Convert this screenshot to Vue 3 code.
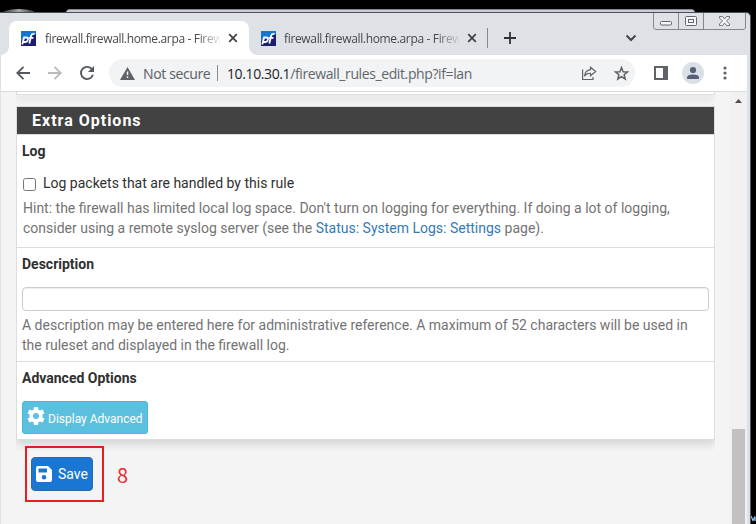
<script setup>
import { ref } from 'vue'
const tabs = [
  { title: 'firewall.firewall.home.arpa - Firew', active: true },
  { title: 'firewall.firewall.home.arpa - Firew', active: false },
]
const logPackets = ref(false)
const description = ref('')
</script>

<template>
  <div class="desktop">
    <div class="behind"></div>
    <div class="orb"></div>
    <svg class="speck" width="5" height="7" viewBox="0 0 5 7"><path d="M0 1L2 5.500L4 1.500V6" fill="none" stroke="#8dbde8" stroke-width="1.300" /><path d="M0 2V4" stroke="#c36a35" /></svg>
    <div class="window">
      <div class="controls">
        <svg width="94" height="18" viewBox="0 0 94 18" fill="none" stroke="#64686e">
          <path d="M.5 0V14q0 2.500 2.500 2.500H90q2.500 0 2.500-2.500V0M25.500 0V16.500M50.500 0V16.500" stroke="#84888d" />
          <rect x="7.500" y="8.500" width="11" height="3.500" rx="1" fill="#f4f5f6" />
          <rect x="32.500" y="3.500" width="11" height="9" rx="1" fill="#f4f5f6" />
          <rect x="35.500" y="6.500" width="5" height="3" />
          <path d="M66.500 3.500h3l2 2.500 2-2.500h3v1.500l-3 3 3 3v1.500h-3l-2-2.500-2 2.500h-3V11l3-3-3-3z" fill="#f4f5f6" stroke-width=".9" />
        </svg>
      </div>

      <div class="tabs">
        <div v-for="(tab, i) in tabs" :key="i" class="tab" :class="{ active: tab.active }">
          <svg class="favicon" width="15" height="15" viewBox="0 0 15 15">
            <rect width="15" height="15" fill="#1c1c72" />
            <path d="M0 0H15V3L0 10z" fill="#1476d0" />
            <g fill="none" stroke="#fff" stroke-width="1.800">
              <path d="M1.200 13.500L3.300 5.800M3 6.500H5.500Q7.500 6.500 6.900 8.800T4.500 11H2.200" />
              <path d="M8.300 12.500L10.200 4.600Q10.700 2.700 13.500 3M7.800 6.800H12.500" />
            </g>
          </svg>
          <span class="title">{{ tab.title }}</span>
          <svg class="close" width="10" height="10" viewBox="0 0 10 10"><path d="M1.200 1.200L8.800 8.800M8.800 1.200L1.200 8.800" stroke="#3c4043" stroke-width="1.700" /></svg>
        </div>
        <i class="tab-sep"></i>
        <svg class="plus" width="12" height="12" viewBox="0 0 12 12"><path d="M6 0V12M0 6H12" stroke="#303336" stroke-width="1.800" /></svg>
        <svg class="chevron" width="12" height="8" viewBox="0 0 12 8"><path d="M1.500 1.500L6 6L10.500 1.500" fill="none" stroke="#44474b" stroke-width="2" /></svg>
      </div>

      <div class="toolbar">
        <svg class="back" width="14" height="14" viewBox="0 0 14 14"><path d="M14 7H1.500M7.500 .8L1.300 7l6.200 6.200" fill="none" stroke="#55595e" stroke-width="1.800" /></svg>
        <svg class="forward" width="14" height="14" viewBox="0 0 14 14"><path d="M0 7H12.500M6.500 .8L12.700 7l-6.200 6.200" fill="none" stroke="#b9bbbe" stroke-width="1.800" /></svg>
        <svg class="reload" width="16" height="16" viewBox="0 0 16 16"><path d="M13.300 4.800A6.100 6.100 0 1 0 13.900 9.800" fill="none" stroke="#55595e" stroke-width="1.900" /><path d="M15 1V7H9z" fill="#55595e" /></svg>
        <div class="omnibox">
          <svg class="warn" width="15" height="13" viewBox="0 0 15 13"><path d="M7.500 0L15 13H0z" fill="#5f6368" /><path d="M7.500 4.500V8M7.500 9.300V11" stroke="#f1f3f4" stroke-width="1.500" /></svg>
          <span class="insecure">Not secure</span>
          <i class="bar"></i>
          <span class="url"><b>10.10.30.1</b>/firewall_rules_edit.php?if=lan</span>
          <svg class="share" width="16" height="15" viewBox="0 0 16 15" fill="none" stroke="#5f6368" stroke-width="1.200"><path d="M1.600 3.500V13.500H12V11" /><path d="M9.500 1.200L14.700 5.500L9.500 9.800V7.300Q5.500 7 3.500 10.200Q4 4.500 9.500 3.700z" /></svg>
          <svg class="star" width="15" height="15" viewBox="0 0 15 15"><path d="M7.500 1.600L9.100 5.700L13.400 6L10.100 8.800L11.200 13L7.500 10.700L3.800 13L4.900 8.800L1.600 6L5.900 5.700z" fill="none" stroke="#5f6368" stroke-width="1.500" /></svg>
        </div>
        <svg class="panel-icon" width="14" height="14" viewBox="0 0 14 14"><path d="M0 0H14V14H0zM2 2V12H9V2z" fill="#5f6368" fill-rule="evenodd" /></svg>
        <svg class="avatar" width="22" height="22" viewBox="0 0 22 22"><circle cx="11" cy="11" r="11" fill="#dbe0e7" /><circle cx="11" cy="8" r="3.100" fill="#56627a" /><path d="M5 17V15.500Q5 12.500 11 12.500T17 15.500V17z" fill="#56627a" /></svg>
        <svg class="dots" width="4" height="14" viewBox="0 0 4 14" fill="#5f6368"><circle cx="2" cy="2" r="1.600" /><circle cx="2" cy="7" r="1.600" /><circle cx="2" cy="12" r="1.600" /></svg>
      </div>

      <div class="viewport">
        <main>
          <div class="previous"></div>
          <section class="panel">
            <h2>Extra Options</h2>
            <div class="group log">
              <h3>Log</h3>
              <label class="check"><input v-model="logPackets" type="checkbox" /><span>Log packets that are handled by this rule</span></label>
              <p class="hint">Hint: the firewall has limited local log space. Don't turn on logging for everything. If doing a lot of logging,<br />consider using a remote syslog server (see the <a>Status: System Logs: Settings</a> page).</p>
            </div>
            <div class="group desc">
              <h3>Description</h3>
              <input v-model="description" class="field" type="text" />
              <p>A description may be entered here for administrative reference. A maximum of 52 characters will be used in<br />the ruleset and displayed in the firewall log.</p>
            </div>
            <div class="group advanced">
              <h3>Advanced Options</h3>
              <button class="info">
                <svg width="18" height="18" viewBox="0 0 18 18"><path d="M7 0h4l.5 2.700 1.500.9 2.500-1 2 3.400-2.100 1.800v2.400l2.100 1.800-2 3.400-2.500-1-1.500.9L11 18H7l-.5-2.700-1.500-.9-2.500 1-2-3.400 2.100-1.800V7.800L.5 6l2-3.400 2.500 1 1.500-.9zM9 6a3 3 0 1 0 0 6a3 3 0 0 0 0-6z" fill="#fff" fill-rule="evenodd" /></svg>
                <span>Display Advanced</span>
              </button>
            </div>
          </section>
          <div class="actions">
            <div class="marker">
              <button class="save">
                <svg width="16" height="16" viewBox="0 0 16 16"><path d="M2 0H12L16 4V14Q16 16 14 16H2Q0 16 0 14V2Q0 0 2 0zM2.500 2.500V6.500H11V2.500zM8 9a2.300 2.300 0 1 0 0 4.600A2.300 2.300 0 0 0 8 9z" fill="#fff" fill-rule="evenodd" /></svg>
                <span>Save</span>
              </button>
            </div>
            <span class="step">8</span>
          </div>
        </main>
        <div class="scrollbar">
          <svg width="7" height="4" viewBox="0 0 7 4"><path d="M0 4L3.500 0L7 4z" fill="#505050" /></svg>
          <div class="thumb"></div>
        </div>
      </div>
    </div>
  </div>
</template>

<style>
body { margin: 0; overflow: hidden; }
</style>
<style scoped>
* { box-sizing: border-box; }
svg { display: block; flex: none; }
.desktop { position: relative; width: 756px; height: 524px; background: #000; padding-top: 12px; overflow: hidden; }
.behind { position: absolute; left: 66px; top: 9px; width: 629px; height: 10px; background: #c9cbda; border-top: 1px solid #888; border-radius: 4px 4px 0 0; }
.orb { position: absolute; left: 0; top: 9px; width: 38px; height: 12px; border-radius: 50% 50% 0 0; background: linear-gradient(90deg, #222, #aaa, #222); }
.speck { position: absolute; left: 751px; top: 515px; }
.window { position: relative; width: 751px; height: 512px; background: #dee1e6; border-top: 1px solid #4d5055; border-right: 1px solid #50565d; border-radius: 0 5px 0 0; padding: 0 3px 0 1px; display: flex; flex-direction: column; }
.controls { position: absolute; right: 3px; top: 0; }
.tabs { height: 42px; padding: 8px 0 0 8px; display: flex; align-items: flex-start; flex: none; font: 12px "Open Sans", sans-serif; color: #45484c; }
.tab { width: 239px; height: 34px; display: flex; align-items: center; padding-left: 13px; }
.tab.active { width: 240px; margin-right: -1px; padding-left: 12px; background: #fff; border-radius: 8px 8px 0 0; position: relative; }
.tab.active .title { margin-left: 9px; }
.tab.active::before, .tab.active::after { content: ""; position: absolute; bottom: 0; width: 8px; height: 8px; }
.tab.active::before { left: -8px; background: radial-gradient(circle at 0 0, transparent 7.500px, #fff 8px); }
.tab.active::after { right: -8px; background: radial-gradient(circle at 100% 0, transparent 7.500px, #fff 8px); }
.title { width: 175px; margin-left: 8px; white-space: nowrap; letter-spacing: -.34px; -webkit-mask-image: linear-gradient(90deg, #000 152px, transparent 177px); }
.close { margin-left: 8px; }
.tab-sep { width: 1px; height: 20px; background: #85888c; margin: 7px 0 0 0; }
.plus { margin: 11px 0 0 16px; }
.chevron { margin: 13px 0 0 109px; }
.toolbar { height: 37px; background: #fff; border-bottom: 1px solid #d9dbde; display: flex; align-items: center; flex: none; padding-left: 15px; }
.forward { margin-left: 18px; }
.reload { margin-left: 17px; }
.omnibox { width: 526px; height: 28px; border-radius: 14px; background: #f1f3f4; margin-left: 14px; display: flex; align-items: center; font: 14px "Open Sans", sans-serif; color: #62666b; }
.warn { margin-left: 11px; }
.insecure { margin-left: 8px; width: 74px; white-space: nowrap; letter-spacing: -.4px; font-family: "Noto Sans", sans-serif; }
.bar { width: 1px; height: 16px; background: #888b8f; }
.url { margin-left: 9px; width: 354px; white-space: nowrap; letter-spacing: -.39px; }
.url b { font-weight: 400; color: #222428; }
.star { margin-left: 17px; }
.panel-icon { margin-left: 19px; }
.avatar { margin-left: 14px; }
.dots { margin-left: 19px; }
.viewport { flex: 1; display: flex; background: #f4f4f4; min-height: 0; }
main { width: 729px; padding-left: 15px; font: 14px/20px Roboto, sans-serif; color: #303030; }
.previous { width: 699px; height: 3px; background: #fff; border: 1px solid #ddd; border-top: 0; box-shadow: 0 4px 9px rgba(0, 0, 0, .14); margin-bottom: 11px; clip-path: inset(0 0 -12px 0); }
.panel { width: 699px; height: 334px; background: #fff; border: 1px solid #ddd; box-shadow: 0 4px 9px rgba(0, 0, 0, .14); clip-path: inset(0 0 -12px 0); }
h2 { height: 28px; margin: 0; background: #424242; border-bottom: 1px solid #ddd; padding-left: 15px; color: #fff; font: 700 16px/28px Roboto, sans-serif; letter-spacing: 1px; }
h3 { margin: 0; font: 700 14px/20px Roboto, sans-serif; }
.group { padding: 6px 5px 0; }
.log { height: 113px; border-bottom: 1px solid #ddd; }
.desc { height: 114px; border-bottom: 1px solid #ddd; }
p { margin: 0; color: #737373; white-space: nowrap; }
.check { display: flex; height: 20px; margin-top: 12px; align-items: center; }
.check input { width: 13px; height: 13px; margin: 2px 7px 0 1px; }
.hint { margin: 5px 0 0 1px; }
a { color: #337ab7; }
.field { display: block; width: 687px; height: 24px; border: 1px solid #ccc; border-radius: 4px; box-shadow: inset 0 1px 1px rgba(0, 0, 0, .075); margin: 13px 0 4px; padding: 0 8px; outline: 0; }
button { display: flex; align-items: center; font-family: Roboto, sans-serif; color: #fff; border-radius: 3px; }
.info { width: 126px; height: 33px; margin-top: 13px; padding: 0 4px; background: #5bc0de; border: 1px solid #46b8da; font-size: 12px; }
.info svg { margin-bottom: 3px; }
.info span { margin: 3px 0 0 3px; white-space: nowrap; }
.actions { display: flex; align-items: center; margin: 6px 0 0 9px; }
.marker { width: 79px; height: 56px; border: 2px solid #ec1c24; padding: 9px 0 0 4px; }
.save { width: 62px; height: 34px; padding: 0 4px; border: 1px solid #2b69a8; background: #1976d2; border-radius: 4px; font-size: 14px; }
.save span { margin: 0 0 1px 6px; }
.step { margin: 2px 0 0 13px; color: #e92b34; font: 20px "Noto Sans CJK SC", sans-serif; line-height: 22px; }
.scrollbar { width: 17px; background: #f1f1f1; padding: 7px 2px 0; display: flex; flex-direction: column; align-items: center; }
.thumb { width: 13px; height: 95px; margin-top: auto; background: #c1c1c1; }
</style>
